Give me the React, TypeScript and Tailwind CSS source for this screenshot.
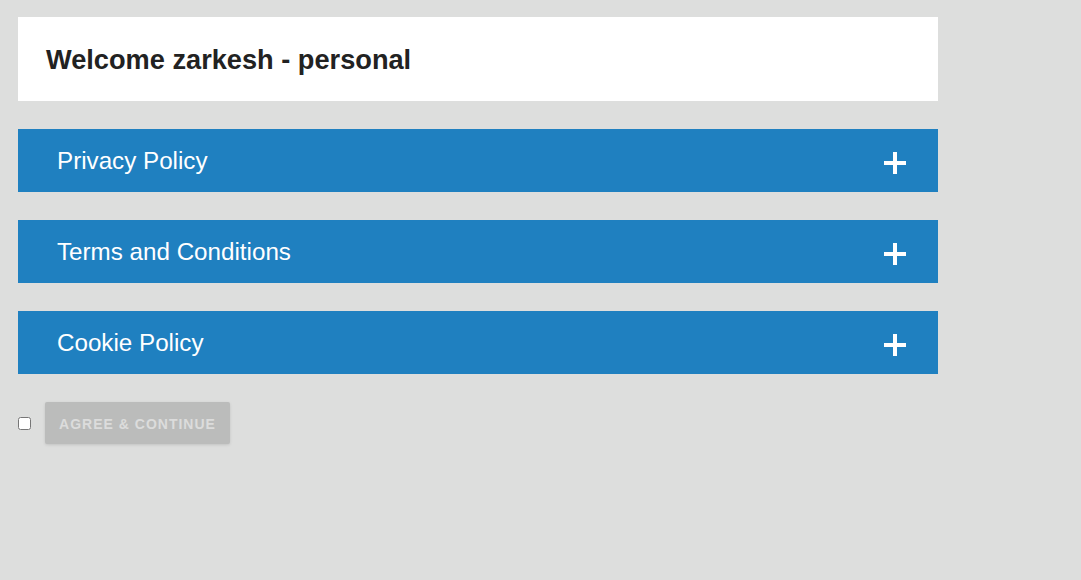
import { useState } from 'react';

const sections = ['Privacy Policy', 'Terms and Conditions', 'Cookie Policy'];

function PlusIcon() {
  return (
    <svg width="22" height="22" viewBox="0 0 22 22" className="mt-[4px] shrink-0">
      <rect x="9" y="0" width="4" height="22" fill="#fff" />
      <rect x="0" y="9" width="22" height="4" fill="#fff" />
    </svg>
  );
}

export default function App() {
  const [agreed, setAgreed] = useState(false);

  return (
    <div className="min-h-[580px] w-full bg-[#dddedd] pt-[17px] pl-[18px] font-['Liberation_Sans',Arial,sans-serif]">
      <div className="w-[920px]">
        <div className="flex h-[84px] items-center bg-white px-[28px] pt-[2px]">
          <h1 className="text-[27.2px] font-bold text-[#222]">Welcome zarkesh - personal</h1>
        </div>

        <div className="mt-[28px] flex flex-col gap-[28px]">
          {sections.map((title) => (
            <button
              key={title}
              type="button"
              className="flex h-[63px] w-full items-center justify-between bg-[#1f80c0] pl-[39px] pr-[32px] text-left"
            >
              <span className="pt-[2px] text-[24.2px] text-white">{title}</span>
              <PlusIcon />
            </button>
          ))}
        </div>

        <div className="mt-[28px] flex items-center">
          <input
            type="checkbox"
            checked={agreed}
            onChange={(e) => setAgreed(e.target.checked)}
            className="m-0 h-[13px] w-[13px]"
          />
          <button
            type="button"
            disabled={!agreed}
            className="ml-[14px] h-[42px] w-[185px] rounded-[2px] bg-[#bbbcbb] pt-[2px] text-[14px] font-bold tracking-[1px] text-[#dcdcdc] shadow-[0_1px_3px_rgba(0,0,0,0.12)]"
          >
            AGREE &amp; CONTINUE
          </button>
        </div>
      </div>
    </div>
  );
}
